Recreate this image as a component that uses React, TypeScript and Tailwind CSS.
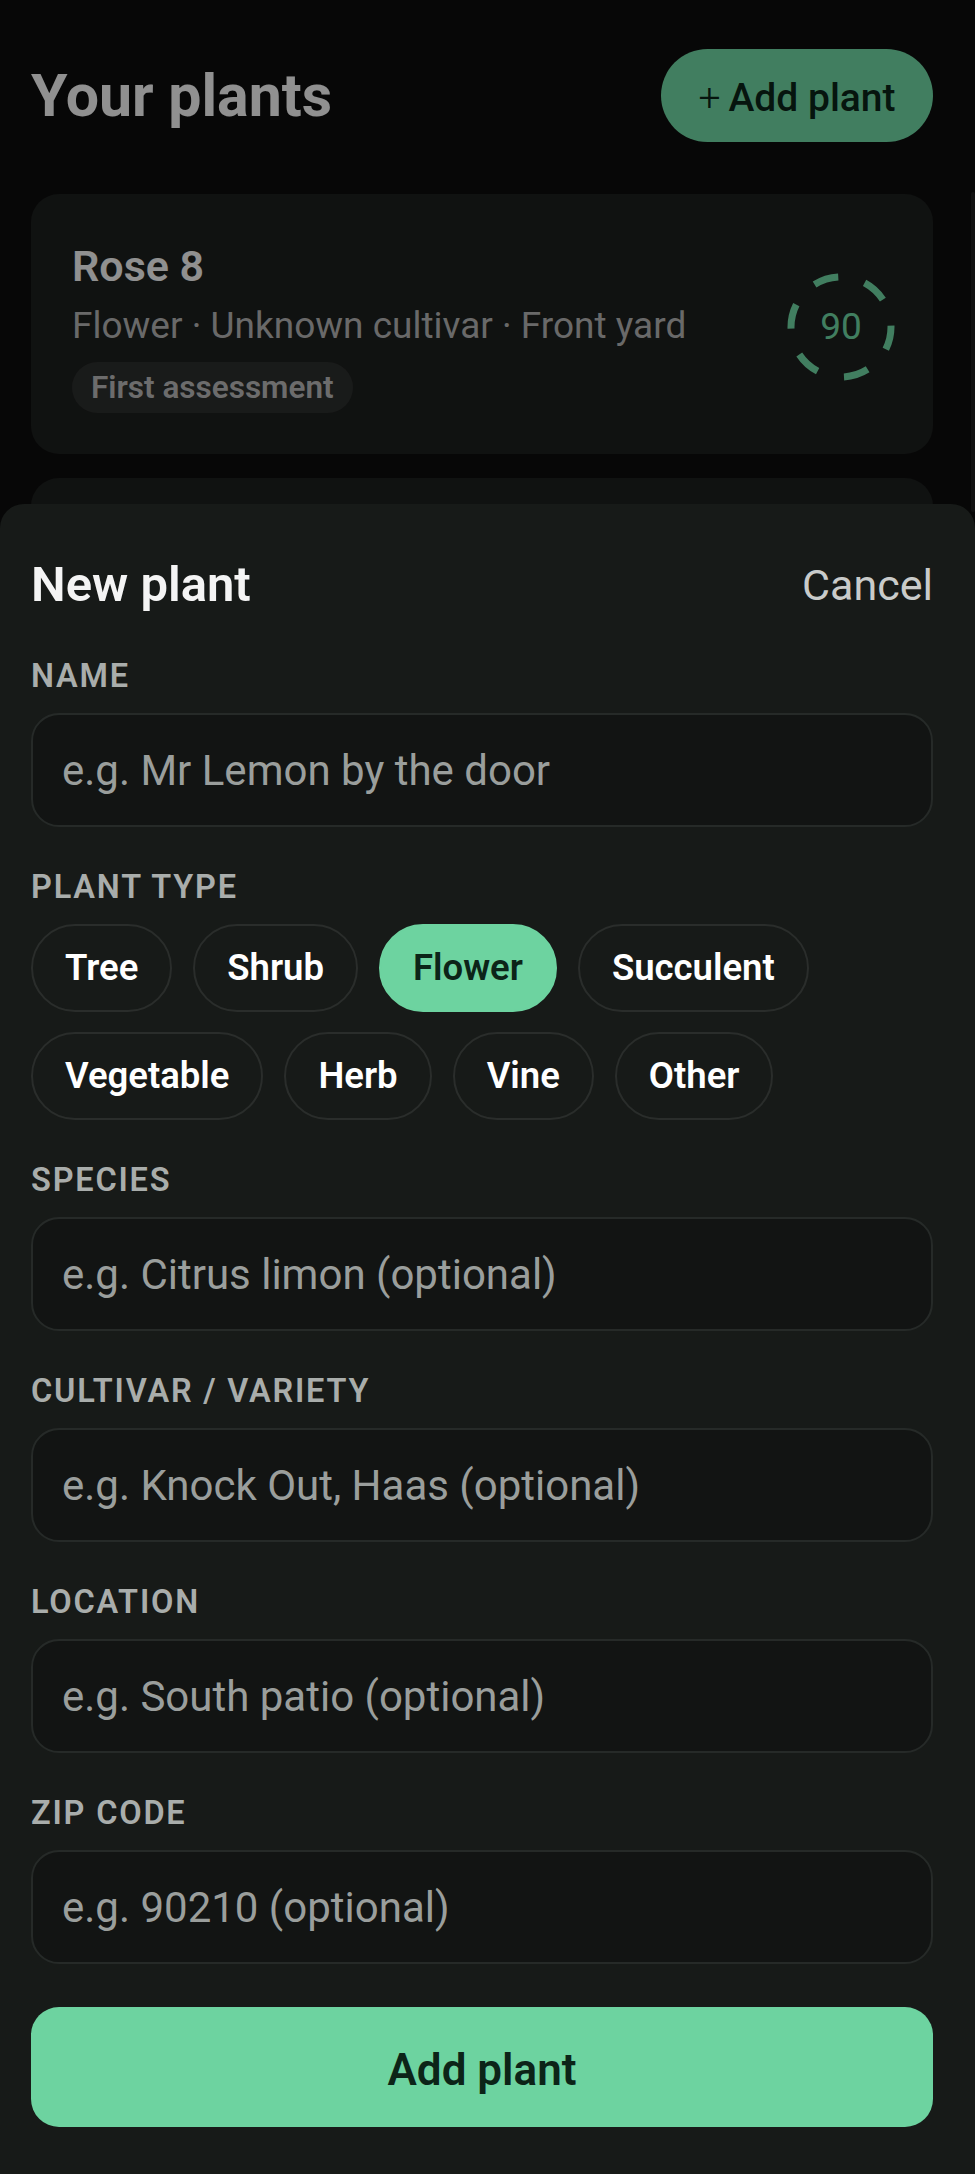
const types = ['Tree', 'Shrub', 'Flower', 'Succulent', 'Vegetable', 'Herb', 'Vine', 'Other'];

function ScoreRing({ score }: { score: number }) {
  return (
    <div className="relative flex h-[108px] w-[108px] items-center justify-center">
      <svg width="108" height="108" viewBox="0 0 108 108" className="absolute inset-0">
        <circle
          cx="54"
          cy="54"
          r="50"
          fill="none"
          stroke="#6dd3a0"
          strokeWidth="7"
          strokeDasharray="25 27.36"
          strokeDashoffset="2"
        />
      </svg>
      <span className="text-[37px] font-normal leading-none text-[#6dd3a0]">{score}</span>
    </div>
  );
}

function Label({ children }: { children: React.ReactNode }) {
  return (
    <div className="text-[32.5px] font-semibold uppercase leading-[38px] tracking-[1.8px] text-[#a9adab]">
      {children}
    </div>
  );
}

function Field({ label, placeholder, first }: { label: string; placeholder: string; first?: boolean }) {
  return (
    <div className={first ? 'mt-[43px]' : 'mt-[41px]'}>
      <Label>{label}</Label>
      <input
        placeholder={placeholder}
        className="mt-[18px] block h-[114px] w-full rounded-[28px] border-2 border-[#262a28] bg-[#121413] px-[29px] text-[42px] text-white outline-none placeholder:text-[#9a9e9c]"
      />
    </div>
  );
}

export default function App() {
  return (
    <div className="relative h-[2174px] w-full overflow-hidden bg-[#0d0d0d] font-['Roboto',sans-serif]">
      {/* Plant list behind the sheet */}
      <div className="pl-[31px] pr-[42px] pt-[49px]">
        <div className="flex items-center justify-between">
          <h1 className="text-[59px] font-bold leading-[70px] text-[#f0f0f0]">Your plants</h1>
          <button className="flex h-[93px] w-[272px] items-center justify-center gap-[8px] rounded-full bg-[#6dd3a0] pt-[6px] text-[39px] font-medium text-[#0b2318]">
            <span className="font-light">+</span>
            <span>Add plant</span>
          </button>
        </div>

        <div className="mt-[52px] flex items-center justify-between rounded-[28px] bg-[#1c1e1d] pb-[41px] pl-[41px] pr-[38px] pt-[46px]">
          <div>
            <div className="text-[43px] font-semibold leading-[52px] text-[#f0f0f0]">Rose 8</div>
            <div className="mt-[13px] text-[37px] leading-[42px] text-[#afafaf]">
              Flower · Unknown cultivar · Front yard
            </div>
            <div className="mt-[15px] flex">
              <span className="flex h-[51px] items-center rounded-full bg-[#2b2d2c] px-[19px] text-[31.5px] font-semibold text-[#b5b5b5]">
                First assessment
              </span>
            </div>
          </div>
          <ScoreRing score={90} />
        </div>

        <div className="mt-[24px] h-[200px] rounded-[28px] bg-[#1c1e1d]" />
      </div>

      {/* scrollbar */}
      <div className="absolute right-0 top-[192px] h-[320px] w-[4px] rounded-full bg-[#1d1d1d]" />

      {/* Dim overlay */}
      <div className="absolute inset-0 bg-black/40" />

      {/* Bottom sheet */}
      <div className="absolute inset-x-0 bottom-0 top-[504px] rounded-t-[24px] bg-[#171a18] pl-[31px] pr-[42px] pt-[52px]">
        <div className="flex items-center justify-between">
          <h2 className="text-[49px] font-semibold leading-[58px] text-[#f4f4f4]">New plant</h2>
          <button className="text-[43px] leading-[58px] text-[#c9cbca]">Cancel</button>
        </div>

        <Field first label="Name" placeholder="e.g. Mr Lemon by the door" />

        <div className="mt-[41px]">
          <Label>Plant type</Label>
          <div className="mt-[18px] flex flex-wrap gap-x-[21px] gap-y-[20px]">
            {types.map((t) => (
              <button
                key={t}
                className={
                  t === 'Flower'
                    ? 'h-[88px] rounded-full border-2 border-[#6dd3a0] bg-[#6dd3a0] px-[32px] text-[36.5px] font-semibold text-[#0c2418]'
                    : 'h-[88px] rounded-full border-2 border-[#2a2d2b] px-[32px] text-[36.5px] font-semibold text-white'
                }
              >
                {t}
              </button>
            ))}
          </div>
        </div>

        <Field label="Species" placeholder="e.g. Citrus limon (optional)" />
        <Field label="Cultivar / Variety" placeholder="e.g. Knock Out, Haas (optional)" />
        <Field label="Location" placeholder="e.g. South patio (optional)" />
        <Field label="Zip code" placeholder="e.g. 90210 (optional)" />

        <button className="mt-[43px] h-[120px] w-full rounded-[28px] bg-[#6dd3a0] pt-[5px] text-[44px] font-semibold text-[#0c2418]">
          Add plant
        </button>
      </div>
    </div>
  );
}
